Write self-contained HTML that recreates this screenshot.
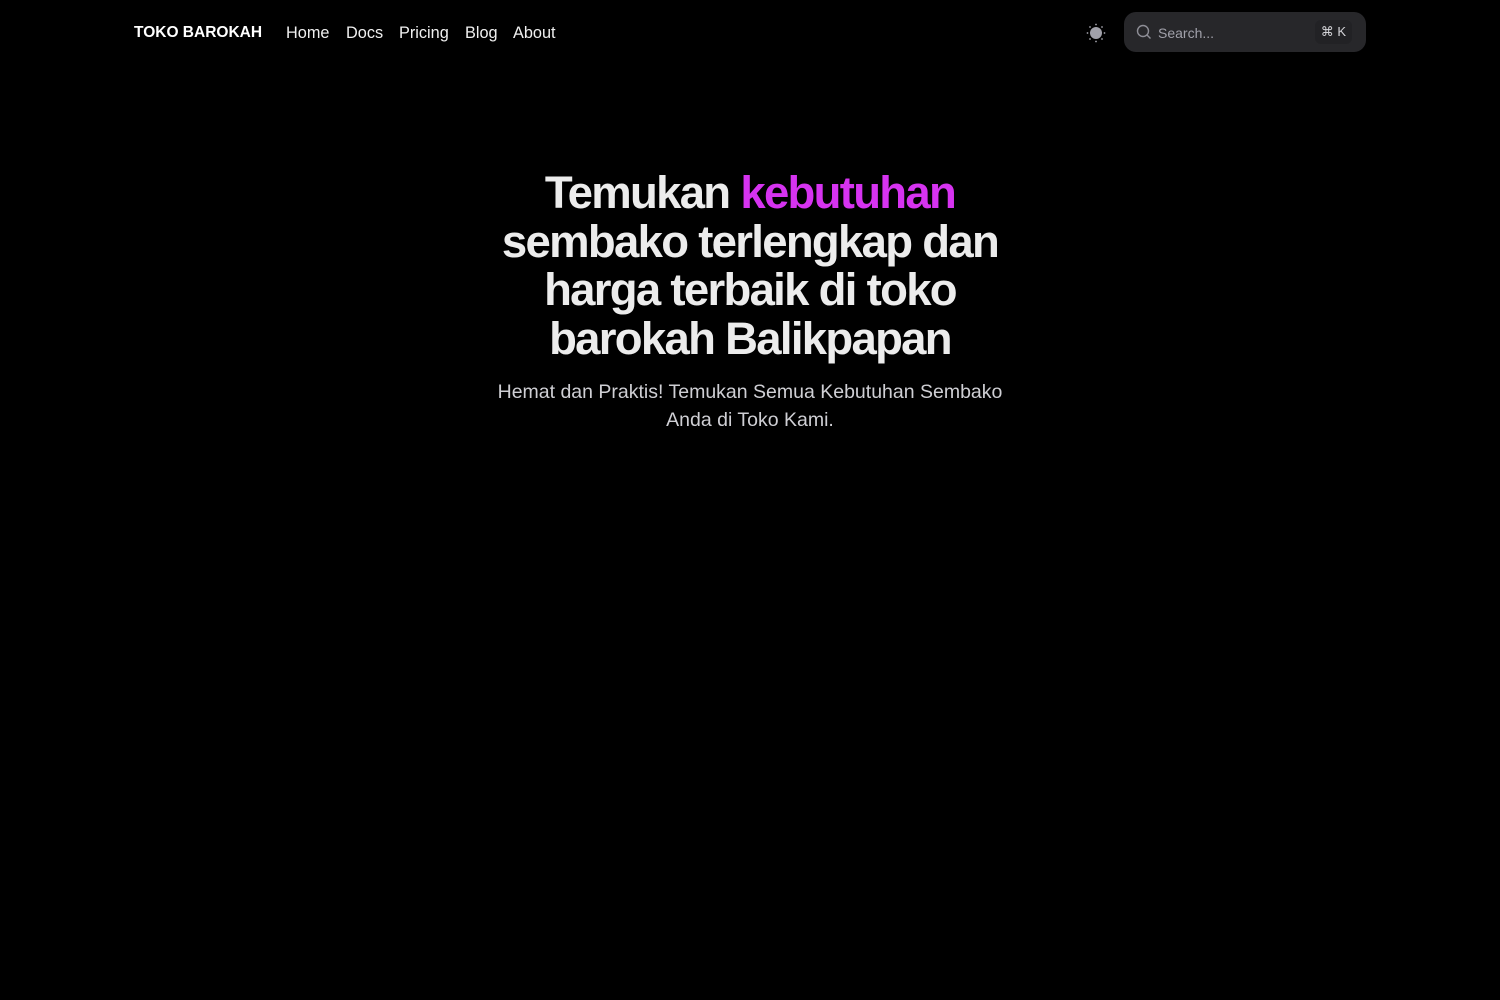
<!DOCTYPE html>
<html><head><meta charset="utf-8"><style>
*{margin:0;padding:0;box-sizing:border-box}
body{width:1500px;height:1000px;background:#000;font-family:"Liberation Sans",sans-serif;color:#ececec;overflow:hidden}
.nav{position:absolute;top:0;left:0;width:1500px;height:64px}
.brand{position:absolute;left:134px;top:24px;font-weight:bold;font-size:15.5px;color:#fff;letter-spacing:0}
.links{position:absolute;left:286px;top:24px;font-size:16.3px;color:#f0f0f0;white-space:nowrap}
.links span{position:absolute}
.sun{position:absolute;left:1086px;top:23px}
.search{position:absolute;left:1124px;top:12px;width:242px;height:40px;border-radius:12px;background:#27272a}
.search .ph{position:absolute;left:34px;top:13px;font-size:14px;color:#a1a1aa}
.kbd{position:absolute;right:14px;top:8px;height:24px;padding:0 6px;border-radius:6px;background:#222225;font-size:13px;line-height:24px;color:#d4d4d8}
h1{position:absolute;left:450px;width:600px;top:169px;text-align:center;font-size:45.5px;line-height:48.5px;font-weight:bold;letter-spacing:-1.7px;color:#ececec}
h1 .p{color:#d633f0}
.sub{position:absolute;left:440px;width:620px;top:378px;text-align:center;font-size:19.5px;line-height:28px;color:#cfcfd4}
</style></head><body>
<div class="nav">
<div class="brand">TOKO BAROKAH</div>
<div class="links"><span style="left:0">Home</span><span style="left:60px">Docs</span><span style="left:113px">Pricing</span><span style="left:179px">Blog</span><span style="left:227px">About</span></div>
<svg class="sun" width="20" height="20" viewBox="0 0 20 20"><circle cx="10" cy="10" r="6" fill="#a1a1aa"/><g fill="#a1a1aa"><circle cx="10" cy="1.5" r=".9"/><circle cx="10" cy="18.5" r=".9"/><circle cx="1.5" cy="10" r=".9"/><circle cx="18.5" cy="10" r=".9"/><circle cx="4" cy="4" r=".9"/><circle cx="16" cy="4" r=".9"/><circle cx="4" cy="16" r=".9"/><circle cx="16" cy="16" r=".9"/></g></svg>
<div class="search">
<svg style="position:absolute;left:12px;top:12px" width="16" height="16" viewBox="0 0 16 16" fill="none" stroke="#8e8e96" stroke-width="1.4"><circle cx="7" cy="7" r="5.5"/><path d="M11 11l3.5 3.5"/></svg>
<div class="ph">Search...</div>
<div class="kbd">⌘ K</div>
</div>
</div>
<h1>Temukan <span class="p">kebutuhan</span><br>sembako terlengkap dan<br>harga terbaik di toko<br>barokah Balikpapan</h1>
<div class="sub">Hemat dan Praktis! Temukan Semua Kebutuhan Sembako<br>Anda di Toko Kami.</div>
</body></html>
